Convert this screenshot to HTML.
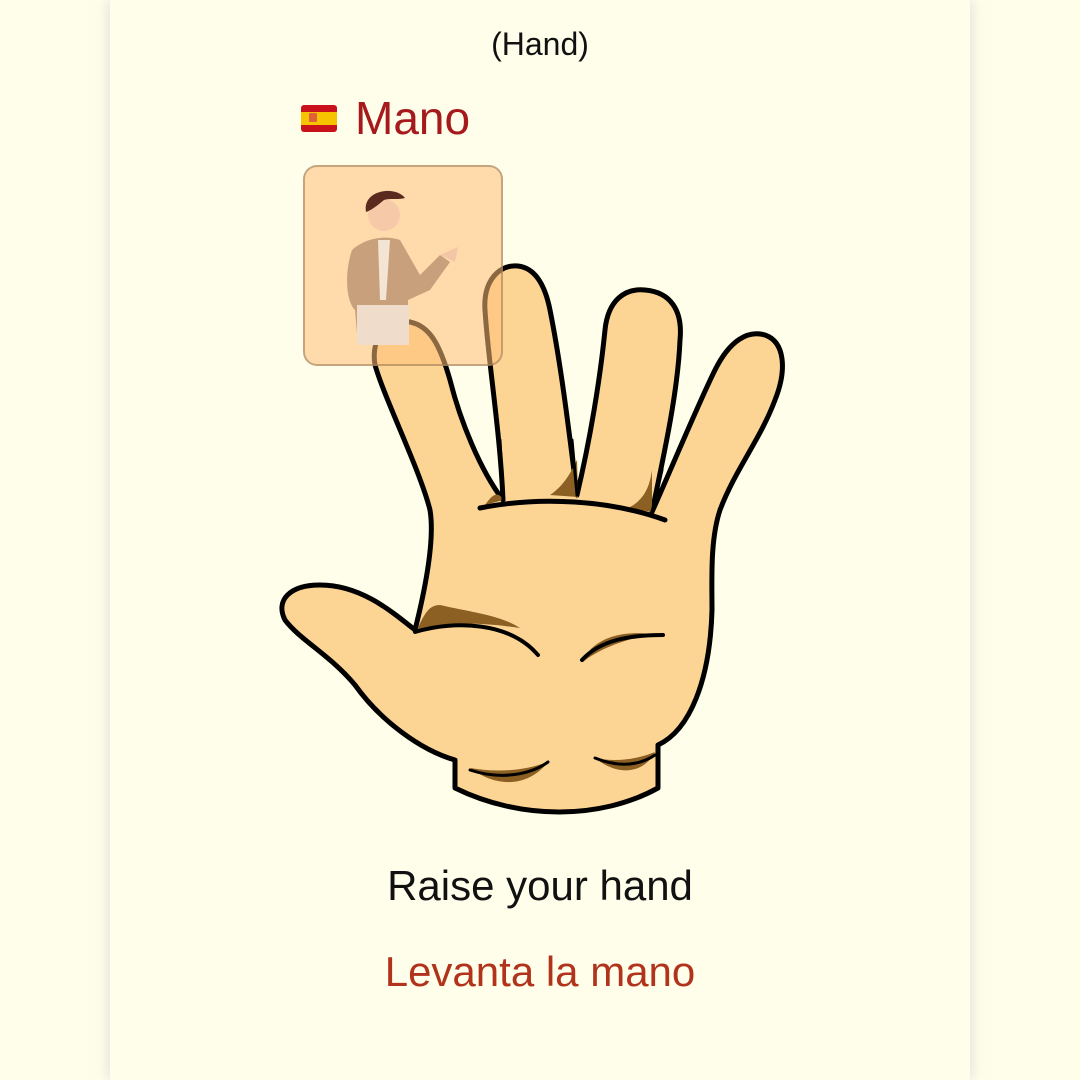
<!DOCTYPE html>
<html><head><meta charset="utf-8"><style>
html,body{margin:0;padding:0;width:1080px;height:1080px;background:#fefeea;overflow:hidden;font-family:"Liberation Sans",sans-serif}
.panel{position:absolute;left:110px;top:0;width:860px;height:1080px;background:#fefeea;box-shadow:0 0 14px rgba(150,150,190,.35)}
.t{position:absolute;width:100%;text-align:center}
</style></head><body>
<div class="panel"></div>
<div class="t" style="top:26px;font-size:32px;color:#111">(Hand)</div>
<div style="position:absolute;left:301px;top:105px;width:36px;height:27px;border-radius:3px;background:linear-gradient(#c8111a 0 26%,#f7c200 26% 74%,#c8111a 74%)"></div>
<div style="position:absolute;left:309px;top:113px;width:8px;height:9px;background:#e0603a;border-radius:1px"></div>
<div style="position:absolute;left:355px;top:91px;font-size:46px;color:#a6191c">Mano</div>
<svg width="1080" height="1080" style="position:absolute;left:0;top:0">
<path d="M415,630 C425,590 435,540 430,510 C420,470 385,400 375,365 C370,335 390,318 410,322 C430,326 440,345 450,380 C460,420 480,470 503,500 C500,430 488,360 485,310 C483,280 500,264 518,266 C535,268 545,285 550,310 C562,370 570,440 577,495 C590,440 600,380 605,330 C608,300 625,288 645,290 C670,292 683,310 680,340 C678,390 665,450 652,512 C675,460 700,400 715,370 C730,340 748,330 765,335 C785,342 787,370 775,400 C760,440 735,470 720,510 C710,540 712,580 712,610 C710,680 690,730 658,745 L658,788 C600,820 520,820 455,788 L455,760 C420,750 380,720 355,685 C330,655 300,640 285,620 C275,600 290,585 320,585 C360,585 390,610 415,630 Z" fill="#fcd595" stroke="#000" stroke-width="5" stroke-linejoin="round"/>
<g fill="#8c5f22">
<path d="M418,628 C425,612 430,605 440,605 C470,612 500,615 520,628 C480,622 450,622 418,630Z"/>
<path d="M583,662 C590,640 620,630 650,634 C625,640 600,648 583,662Z"/>
<path d="M470,768 C500,790 530,785 548,762 C520,772 495,772 470,768Z"/>
<path d="M595,758 C620,778 645,772 655,752 C635,760 615,762 595,758Z"/>
<path d="M485,505 C492,495 498,490 503,500Z"/>
<path d="M550,495 C565,485 572,470 577,460 L578,497Z"/>
<path d="M628,508 C645,500 650,485 652,470 L652,512Z"/>
</g>
<g fill="none" stroke="#000" stroke-linecap="round">
<path d="M480,508 C540,496 610,500 665,520" stroke-width="5"/>
<path d="M503,500 L500,440 M577,495 L572,440 M652,512 L662,470" stroke-width="3"/>
<path d="M415,632 C455,620 510,622 538,655" stroke-width="4"/>
<path d="M582,660 C600,640 630,635 663,635" stroke-width="4"/>
<path d="M470,770 C500,780 530,775 548,762" stroke-width="3"/>
<path d="M595,758 C620,768 640,765 655,755" stroke-width="3"/>
</g>
</svg>
<div style="position:absolute;left:303px;top:165px;width:196px;height:197px;border:2px solid rgba(150,120,90,.55);border-radius:14px;background:rgba(255,190,120,.55)"></div>
<svg width="1080" height="400" style="position:absolute;left:0;top:0">
<path d="M352,250 C365,238 385,235 400,240 L420,275 L440,255 L450,262 L430,290 L408,300 L408,345 L358,345 L355,310 C345,300 345,270 352,250Z" fill="#c9a07c"/>
<rect x="357" y="305" width="52" height="40" fill="#efdcca"/>
<path d="M378,240 L390,240 L386,300 L380,300Z" fill="#f3e4d4"/>
<circle cx="384" cy="215" r="16" fill="#f6c9a8"/>
<path d="M366,212 C362,190 395,185 405,198 C398,200 390,198 384,200 C378,205 372,210 366,212Z" fill="#5a2a1e"/>
<path d="M440,255 L458,247 L455,262 Z" fill="#f3c7a5"/>
</svg>
<div class="t" style="top:862px;font-size:42px;color:#111">Raise your hand</div>
<div class="t" style="top:948px;font-size:42px;color:#b2331c">Levanta la mano</div>
</body></html>
